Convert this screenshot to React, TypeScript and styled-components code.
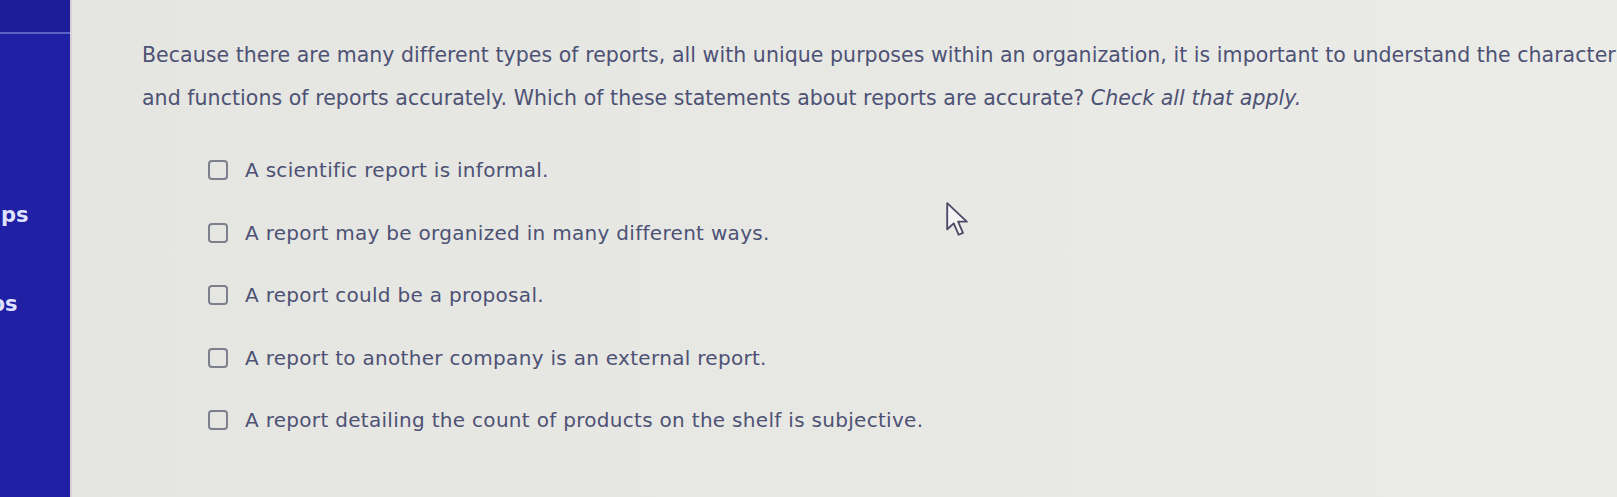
import styled, { createGlobalStyle } from 'styled-components';

const GlobalStyle = createGlobalStyle`
  html, body {
    margin: 0;
    padding: 0;
    background: #e6e6e3;
  }
`;

const options = [
  'A scientific report is informal.',
  'A report may be organized in many different ways.',
  'A report could be a proposal.',
  'A report to another company is an external report.',
  'A report detailing the count of products on the shelf is subjective.',
];

const navItems = [
  { label: 'ps', shift: 0 },
  { label: 'ps', shift: 11 },
];

const App = () => (
  <Page>
    <GlobalStyle />
    <Sidebar>
      <SidebarTop />
      <NavList>
        {navItems.map((item, i) => (
          <NavItem key={i} $shift={item.shift}>
            {item.label}
          </NavItem>
        ))}
      </NavList>
    </Sidebar>
    <Main>
      <Question>
        Because there are many different types of reports, all with unique purposes within an organization, it is
        important to understand the characteristics
        <br />
        and functions of reports accurately. Which of these statements about reports are accurate?{' '}
        <em>Check all that apply.</em>
      </Question>
      <OptionList>
        {options.map((text) => (
          <Option key={text}>
            <Box type="checkbox" />
            <span>{text}</span>
          </Option>
        ))}
      </OptionList>
      <Cursor viewBox="0 0 22 34" width="24" height="37">
        <path
          d="M2 2 L2 26 L8 20.5 L12.5 31 L16.5 29.3 L12 19 L20 19 Z"
          fill="#f4f4f4"
          stroke="#4d4a66"
          strokeWidth="1.7"
          strokeLinejoin="round"
        />
      </Cursor>
    </Main>
  </Page>
);

export default App;

const Page = styled.div`
  display: flex;
  height: 497px;
  overflow: hidden;
  font-family: 'DejaVu Sans', Verdana, sans-serif;
`;

const Sidebar = styled.aside`
  width: 70px;
  flex: none;
  display: flex;
  flex-direction: column;
  background: #1f20a4;
  border-right: 2px solid #d9cfd8;
  overflow: hidden;
`;

const SidebarTop = styled.div`
  height: 32px;
  background: #1b1c96;
  border-bottom: 2px solid #5a62c6;
`;

const NavList = styled.div`
  display: flex;
  flex-direction: column;
  padding-top: 170px;
  gap: 67px;
`;

const NavItem = styled.div<{ $shift: number }>`
  font-size: 21px;
  font-weight: bold;
  color: #dfe2ff;
  line-height: 22px;
  white-space: nowrap;
  margin-left: ${({ $shift }) => 1 - $shift}px;
`;

const Main = styled.main`
  position: relative;
  flex: 1;
  min-width: 0;
  padding: 34px 0 0 70px;
  background: linear-gradient(90deg, #e5e5e2 0%, #e8e8e5 60%, #ebebe8 100%);
  color: #4d5274;
`;

const Question = styled.p`
  margin: 0;
  font-size: 20.5px;
  letter-spacing: 0.05px;
  line-height: 43px;
  white-space: nowrap;

  em {
    font-style: italic;
  }
`;

const OptionList = styled.div`
  display: flex;
  flex-direction: column;
  margin-top: 19px;
  padding-left: 66px;
`;

const Option = styled.label`
  display: flex;
  align-items: center;
  gap: 17px;
  height: 62.5px;
  font-size: 20px;
  letter-spacing: 0.3px;
`;

const Box = styled.input`
  appearance: none;
  width: 20px;
  height: 20px;
  margin: 0;
  border: 2px solid #7c7f8c;
  border-radius: 4px;
  background: transparent;
  box-sizing: border-box;
`;

const Cursor = styled.svg`
  position: absolute;
  left: 873px;
  top: 201px;
`;
